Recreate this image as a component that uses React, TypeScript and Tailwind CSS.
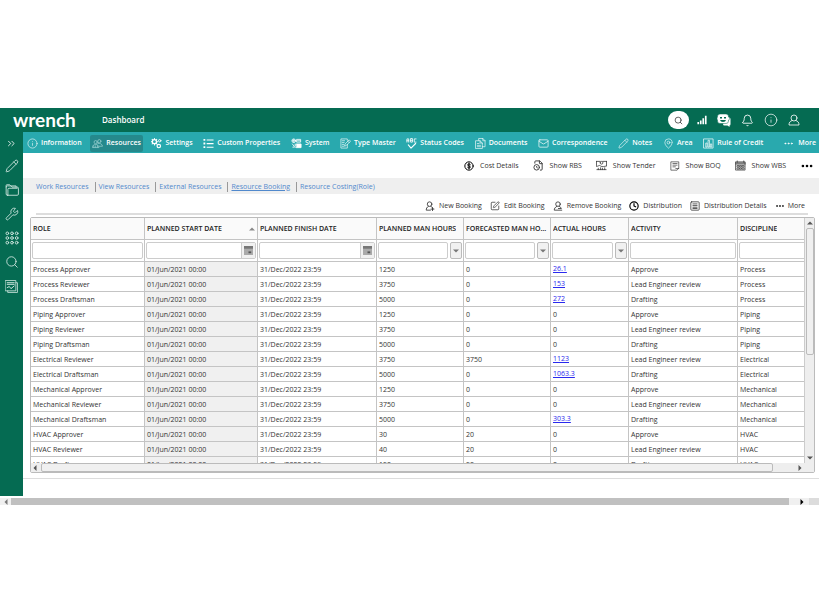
import type { ReactNode } from "react";
import { Bell, Clock, Ellipsis, FileClock, Info, Mail, MapPin, Pencil, Search, SquarePen, Wrench } from "lucide-react";

type IconProps = { className?: string };

const Svg = ({ className = "size-3", children, width = 1.4 }: { className?: string; children: ReactNode; width?: number }) => (
  <svg viewBox="0 0 24 24" fill="none" stroke="currentColor" strokeWidth={width} strokeLinecap="round" strokeLinejoin="round" className={className} aria-hidden="true">
    {children}
  </svg>
);

const People = ({ className }: IconProps) => (
  <Svg className={className} width={1.5}>
    <circle cx="8" cy="9" r="3.5" />
    <circle cx="16" cy="7" r="3.5" />
    <path d="M1 20c0-4 3-6 7-6s6 2 7 6zM13 12c5-1 9 1 10 6h-7M4 17v3M8 17v3M12 17v3" />
  </Svg>
);
const Gears = ({ className }: IconProps) => (
  <Svg className={className} width={2.8}>
    <circle cx="7.5" cy="8" r="4.5" />
    <path d="M7.500 1v2M7.500 13v2M.5 8h2M12.500 8h2M2.500 3l1.500 1.500M11 11.500l1.500 1.500M12.500 3L11 4.500M2.500 13L4 11.500" strokeWidth="2.200" />
    <circle cx="19" cy="6" r="2.600" strokeWidth="2" />
    <circle cx="17" cy="17.5" r="3.800" strokeWidth="2.600" />
  </Svg>
);
const BulletList = ({ className }: IconProps) => (
  <svg viewBox="0 0 24 24" fill="currentColor" className={className} aria-hidden="true">
    <path d="M1 2h4v4H1zM1 10h4v4H1zM1 18h4v4H1zM8 3h15v2.500H8zM8 11h15v2.500H8zM8 19h15v2.500H8z" />
  </svg>
);
const SystemIcon = ({ className }: IconProps) => (
  <Svg className={className} width={1.8}>
    <circle cx="6" cy="6" r="4" /><path d="M3 6h6M6 3v6M13 3h8v6h-8zM14 6h6" />
    <rect x="12" y="13" width="10" height="8" fill="currentColor" /><path d="M3 13l6 8M9 13v4M4 20h2" />
  </Svg>
);
const TypeIcon = ({ className }: IconProps) => (
  <Svg className={className}>
    <path d="M16 14v8H2V2h14v3M5 6h5M5 10h4M5 14h3M5 18h3M10 17l1-4 9-9 3 3-9 9zM17 7l3 3" />
  </Svg>
);
const StatusIcon = ({ className }: IconProps) => (
  <Svg className={className} width={1.8}>
    <path d="M2 9V2h4v7M2 6h4M10 2v7h4V2zM10 5h4M22 2h-4v7h4" />
    <path d="M5 15l6 7L21 12" strokeWidth="2.400" />
  </Svg>
);
const Docs = ({ className }: IconProps) => (
  <Svg className={className}>
    <path d="M8 5V1h9l5 5v13h-6M17 1v5h5M2 6h9l5 5v12H2zM11 6v5h5M5 12h4M5 16h7M5 19h7" />
  </Svg>
);
const BarsBox = ({ className }: IconProps) => (
  <Svg className={className} width={1.5}>
    <rect x="2" y="2" width="20" height="20" /><path d="M6 19v-8h3v8zM11 19V5h3v14zM16 19v-6h3v6z" />
  </Svg>
);
const Coin = ({ className }: IconProps) => (
  <Svg className={className} width={2.4}>
    <circle cx="12" cy="12" r="10" /><path d="M15.500 8.500c-1-2-7-2-7 1s7 2 7 5-6 3-7 1M12 5v14" />
  </Svg>
);
const Tender = ({ className }: IconProps) => (
  <Svg className={className} width={1.7}>
    <path d="M1 3h8M15 3h8M9 6a3 3 0 1 0 6 0 3 3 0 1 0-6 0M1 3v9M23 3v9M1 14c6 0 5-4 9-1s7 1 13 0M2 21h20M5 21v-3M10 21v-4M14 21v-3M19 21v-4" />
  </Svg>
);
const Boq = ({ className }: IconProps) => (
  <Svg className={className} width={1.6}>
    <path d="M3 2h18v15l-4 5H3zM7 6h10M7 10h10M7 14h6M14 18h7" />
  </Svg>
);
const Wbs = ({ className }: IconProps) => (
  <Svg className={className} width={1.5}>
    <path d="M2 4h20v18H2zM2 9h20M5 2v3M19 2v3M5 12h4v3H5zM11 12h3v3h-3zM16 12h4v3h-4zM5 17h4v3H5zM11 17h3v3h-3zM16 17h4v3h-4z" />
    <path d="M2 6.500h20" strokeWidth="2.500" />
  </Svg>
);
const Person = ({ className }: IconProps) => (
  <Svg className={className} width={2}>
    <circle cx="11" cy="7.500" r="5.500" /><path d="M8 13c-4 2-5 5-5 9h10M14 13c3 1 4 3 5 5M18 16v7M14.500 19.500h7" />
  </Svg>
);
const PersonMinus = ({ className }: IconProps) => (
  <Svg className={className} width={2}>
    <circle cx="12" cy="7.500" r="5.500" /><path d="M9 13c-4 2-6 5-6 9h18M15 13c3 1 4 3 5 5h-7" />
  </Svg>
);
const ListBox = ({ className }: IconProps) => (
  <Svg className={className} width={1.9}>
    <rect x="2" y="2" width="20" height="20" rx="2" /><path d="M7 7h10M7 11h10M7 15h10M7 18h10" />
  </Svg>
);
const Signal = ({ className }: IconProps) => (
  <svg viewBox="0 0 24 24" fill="currentColor" className={className} aria-hidden="true">
    <path d="M1 17h4v5H1zM7 13h4v9H7zM13 8h4v14h-4zM19 2h4v20h-4z" />
  </svg>
);
const ChatBot = ({ className }: IconProps) => (
  <svg viewBox="0 0 28 28" className={className} aria-hidden="true">
    <path d="M21 9h3q3 0 3 3v10q0 3-2 3v3l-4-3h-6q-3 0-3-3" fill="white" />
    <path d="M6 2h12q5 0 5 5v1q2 0 2 3t-2 3v2q0 5-5 5H6q-5 0-5-5v-2q-1-1-1-3t1-3V7q0-5 5-5z" fill="white" stroke="#056b52" />
    <path d="M6 8h4v3H6zM14 8h4v3h-4zM6 14h12q-1 4-6 4t-6-4z" fill="#056b52" />
  </svg>
);
const Account = ({ className }: IconProps) => (
  <Svg className={className} width={1.6}>
    <circle cx="12" cy="8" r="6" /><path d="M8.500 13C4 14 2 17 2 22h20c0-5-2-8-6.500-9" />
  </Svg>
);
const Folder = ({ className }: IconProps) => (
  <Svg className={className} width={1.5}>
    <path d="M4 21h17q2 0 2-2V9q0-2-2-2h-9l-2-2H4q-2 0-2 2v12q0 2 2 2zM5 21V11q0-2 2-2h14M2 7V4q0-1 1-1h5l2 2h9v2" />
  </Svg>
);
const Dots = ({ className }: IconProps) => (
  <Svg className={className} width={1.6}>
    {[4, 12, 20].map((y) => [4, 12, 20].map((x) => <circle key={`${x}-${y}`} cx={x} cy={y} r="2.300" />))}
  </Svg>
);
const Report = ({ className }: IconProps) => (
  <Svg className={className} width={1.5}>
    <path d="M20 5h3v18H5v-3" /><rect x="1" y="1" width="19" height="19" /><path d="M4 5h13M4 8h13M4 14l4-2 3 4 6-5" strokeWidth="1.800" />
  </Svg>
);

const thin = 1.3;
const navItems: { label: string; icon: ReactNode; active?: boolean }[] = [
  { label: "Information", icon: <Info className="size-[11px]" strokeWidth={thin} /> },
  { label: "Resources", icon: <People className="size-[11px] text-[#9fd3d3]" />, active: true },
  { label: "Settings", icon: <Gears className="size-[11px]" /> },
  { label: "Custom Properties", icon: <BulletList className="size-[11px]" /> },
  { label: "System", icon: <SystemIcon className="size-[11px]" /> },
  { label: "Type Master", icon: <TypeIcon className="size-[11px]" /> },
  { label: "Status Codes", icon: <StatusIcon className="size-[11px]" /> },
  { label: "Documents", icon: <Docs className="size-[11px]" /> },
  { label: "Correspondence", icon: <Mail className="size-[11px]" strokeWidth={1.5} /> },
  { label: "Notes", icon: <Pencil className="size-[11px]" strokeWidth={thin} /> },
  { label: "Area", icon: <MapPin className="size-[11px]" strokeWidth={thin} /> },
  { label: "Rule of Credit", icon: <BarsBox className="size-[11px]" /> },
];

const sideItems = [
  { label: "Edit", icon: <Pencil className="size-[14px]" strokeWidth={1.5} /> },
  { label: "Folders", icon: <Folder className="size-[14px]" /> },
  { label: "Tools", icon: <Wrench className="size-[14px]" strokeWidth={1.5} /> },
  { label: "Apps", icon: <Dots className="size-[14px]" /> },
  { label: "Search", icon: <Search className="size-[14px]" strokeWidth={1.5} /> },
  { label: "Reports", icon: <Report className="size-[13px]" /> },
];

const tools = [
  { label: "Cost Details", icon: <Coin className="size-[10px] text-black" /> },
  { label: "Show RBS", icon: <FileClock className="size-[11px]" strokeWidth={2} /> },
  { label: "Show Tender", icon: <Tender className="size-[11px]" /> },
  { label: "Show BOQ", icon: <Boq className="size-[10px]" /> },
  { label: "Show WBS", icon: <Wbs className="size-[11px]" /> },
];

const actions = [
  { label: "New Booking", icon: <Person className="size-[10px]" /> },
  { label: "Edit Booking", icon: <SquarePen className="size-[10px]" strokeWidth={1.8} /> },
  { label: "Remove Booking", icon: <PersonMinus className="size-[10px]" /> },
  { label: "Distribution", icon: <Clock className="size-[10px] text-black" strokeWidth={2.8} /> },
  { label: "Distribution Details", icon: <ListBox className="size-[10px]" /> },
];

const subTabs = ["Work Resources", "View Resources", "External Resources", "Resource Booking", "Resource Costing(Role)"];

type Filter = "text" | "date" | "number";
const columns: { label: string; filter: Filter; width: string }[] = [
  { label: "ROLE", filter: "text", width: "w-[114px]" },
  { label: "PLANNED START DATE", filter: "date", width: "w-[113px]" },
  { label: "PLANNED FINISH DATE", filter: "date", width: "w-[119px]" },
  { label: "PLANNED MAN HOURS", filter: "number", width: "w-[87px]" },
  { label: "FORECASTED MAN HOURS", filter: "number", width: "w-[87px]" },
  { label: "ACTUAL HOURS", filter: "number", width: "w-[78px]" },
  { label: "ACTIVITY", filter: "text", width: "w-[109px]" },
  { label: "DISCIPLINE", filter: "text", width: "" },
];

const rows = [
  ["Process Approver", "1250", "0", "26.1", "Approve", "Process"],
  ["Process Reviewer", "3750", "0", "153", "Lead Engineer review", "Process"],
  ["Process Draftsman", "5000", "0", "272", "Drafting", "Process"],
  ["Piping Approver", "1250", "0", "0", "Approve", "Piping"],
  ["Piping Reviewer", "3750", "0", "0", "Lead Engineer review", "Piping"],
  ["Piping Draftsman", "5000", "0", "0", "Drafting", "Piping"],
  ["Electrical Reviewer", "3750", "3750", "1123", "Lead Engineer review", "Electrical"],
  ["Electrical Draftsman", "5000", "0", "1063.3", "Drafting", "Electrical"],
  ["Mechanical Approver", "1250", "0", "0", "Approve", "Mechanical"],
  ["Mechanical Reviewer", "3750", "0", "0", "Lead Engineer review", "Mechanical"],
  ["Mechanical Draftsman", "5000", "0", "303.3", "Drafting", "Mechanical"],
  ["HVAC Approver", "30", "20", "0", "Approve", "HVAC"],
  ["HVAC Reviewer", "40", "20", "0", "Lead Engineer review", "HVAC"],
  ["HVAC Draftsman", "150", "50", "0", "Drafting", "HVAC"],
];

function Arrow({ dir, className = "text-[#555]" }: { dir: "up" | "down" | "left" | "right"; className?: string }) {
  const d = { up: "M0 6L4 2L8 6z", down: "M0 2L4 6L8 2z", left: "M6 0L2 4L6 8z", right: "M2 0L6 4L2 8z" }[dir];
  return (
    <svg viewBox="0 0 8 8" fill="currentColor" className={`size-[6px] shrink-0 ${className}`} aria-hidden="true">
      <path d={d} />
    </svg>
  );
}

function FilterBox({ label, filter }: { label: string; filter: Filter }) {
  if (filter === "date") {
    return (
      <div className="flex h-[17px] rounded-xs border border-[#ccc] bg-white">
        <input aria-label={`Filter ${label}`} className="w-full min-w-0 flex-1 outline-none" />
        <button aria-label={`Pick ${label}`} className="grid w-[14px] shrink-0 place-items-center border-l border-[#ccc] bg-[#f1f1f1]">
          <svg viewBox="0 0 10 10" className="size-[9px]" aria-hidden="true">
            <path d="M0 0h10v10H0z" fill="#aaa" /><path d="M0 0h10v3H0z" fill="#777" /><path d="M5 6h3v2H5z" fill="#555" />
          </svg>
        </button>
      </div>
    );
  }
  return (
    <div className="flex gap-[2px]">
      <input aria-label={`Filter ${label}`} className="h-[17px] w-full min-w-0 flex-1 rounded-xs border border-[#ccc] bg-white outline-none" />
      {filter === "number" && (
        <button aria-label={`${label} options`} className="grid h-[17px] w-3 shrink-0 place-items-center rounded-xs border border-[#bbb] bg-[#f1f1f1]">
          <Arrow dir="down" className="text-[#777]" />
        </button>
      )}
    </div>
  );
}

function BookingTable() {
  return (
    <table className="w-[calc(100%+10px)] table-fixed border-separate border-spacing-0 text-left text-[#333]">
      <thead>
        <tr className="h-[22px] bg-[#fafafa]">
          {columns.map((c, i) => (
            <th key={c.label} scope="col" className={`${c.width} border-r border-b border-[#c4c4c4] p-0 px-[2px] font-semibold text-[#222]`}>
              <div className="flex items-center justify-between">
                <span className="truncate">{c.label}</span>
                {i === 1 && <Arrow dir="up" className="text-[#888]" />}
              </div>
            </th>
          ))}
        </tr>
        <tr className="h-[22px]">
          {columns.map((c) => (
            <td key={c.label} className="border-r border-b border-[#c4c4c4] p-0 px-px">
              <FilterBox label={c.label} filter={c.filter} />
            </td>
          ))}
        </tr>
      </thead>
      <tbody>
        {rows.map(([role, planned, forecast, actual, activity, discipline]) => (
          <tr key={role} className="h-[15px]">
            {[role, "01/Jun/2021 00:00", "31/Dec/2022 23:59", planned, forecast, actual, activity, discipline].map((v, i) => (
              <td key={i} className={`border-r border-b border-[#c4c4c4] px-[2px] pt-[2px] pb-0 leading-3 whitespace-nowrap ${i === 1 ? "bg-[#f0f0f0]" : ""}`}>
                {i === 5 && v !== "0" ? <a href="#hours" className="block h-3 leading-[10px] text-[#2a2aee] underline">{v}</a> : v}
              </td>
            ))}
          </tr>
        ))}
      </tbody>
    </table>
  );
}

export default function App() {
  return (
    <div className="min-h-screen overflow-hidden bg-white pt-[108px] font-['Open_Sans',sans-serif] text-[7px] leading-[10px]">
      <header className="flex h-6 items-center bg-[#056b52] pr-[19px] pl-[13px] text-white">
        <span className="w-[89px] font-['Lato',sans-serif] text-[19px] leading-6 font-bold">wrench</span>
        <a href="#dashboard" className="text-[8px] font-semibold">Dashboard</a>
        <div className="ml-auto flex items-center gap-[10px]">
          <button aria-label="Search" className="-mr-[2px] grid h-[18px] w-[21px] place-items-center rounded-full bg-white text-[#333]"><Search className="size-[9px]" /></button>
          <button aria-label="Statistics"><Signal className="size-[10px]" /></button>
          <button aria-label="Assistant"><ChatBot className="size-[14px]" /></button>
          <button aria-label="Notifications"><Bell className="size-[13px]" strokeWidth={1.6} /></button>
          <button aria-label="About"><Info className="size-[14px]" strokeWidth={1.2} /></button>
          <button aria-label="Account"><Account className="size-3" /></button>
        </div>
      </header>

      <div className="flex">
        <aside className="flex w-[23px] shrink-0 flex-col items-center bg-[#056b52] text-[#cfe6df]">
          <button aria-label="Expand menu" className="grid h-[22px] place-items-center pt-px text-white">
            <Svg className="size-[9px]" width={2.2}><path d="M4 6l6 6-6 6M13 6l6 6-6 6" /></Svg>
          </button>
          {sideItems.map((s) => (
            <button key={s.label} aria-label={s.label} className="grid h-6 place-items-center">{s.icon}</button>
          ))}
        </aside>

        <main className="flex min-w-0 flex-1 flex-col">
          <nav className="flex h-[21px] items-center bg-[#29a9ae] pt-px pr-[3px] pl-[2px] font-semibold text-white">
            <div className="mr-[18px] flex flex-1 items-center justify-between">
              {navItems.map((n) => (
                <a key={n.label} href="#nav" className={`flex h-[17px] shrink-0 items-center gap-[3px] rounded-xs px-[2px] ${n.active ? "bg-[#25898c]" : ""}`}>
                  {n.icon}{n.label}
                </a>
              ))}
            </div>
            <button className="flex shrink-0 items-center gap-1"><Ellipsis className="size-[11px]" />More</button>
          </nav>

          <div className="flex h-[25px] items-center justify-end gap-[14px] pr-[5px] text-[#333]">
            {tools.map((t) => (
              <button key={t.label} className="flex items-center gap-[6px]">{t.icon}{t.label}</button>
            ))}
            <button aria-label="More tools" className="text-black"><Ellipsis className="size-[14px]" strokeWidth={2.5} /></button>
          </div>

          <div className="flex h-4 items-center bg-[#efefef] pt-px pl-[13px] text-[#5189cc]">
            {subTabs.map((t, i) => (
              <a key={t} href="#tab" className={`mr-[3px] pr-[6px] ${i < 4 ? "border-r border-[#999]" : ""}`}>
                <span className={i === 3 ? "underline" : ""}>{t}</span>
              </a>
            ))}
          </div>

          <div className="mr-[11px] ml-[13px] flex h-[21px] items-center justify-end gap-[8px] border-b-2 border-[#ddd] pt-[5px] pr-[3px] text-[#333]">
            {actions.map((a) => (
              <button key={a.label} className="flex items-center gap-1">{a.icon}{a.label}</button>
            ))}
            <button className="flex items-center gap-[3px]"><Ellipsis className="size-[10px]" strokeWidth={3} />More</button>
          </div>

          <section className="mt-[2px] mr-1 ml-[7px] rounded-xs border border-[#bbb]">
            <div className="flex">
              <div className="h-[245px] min-w-0 flex-1 overflow-hidden"><BookingTable /></div>
              <div className="flex w-[10px] flex-col items-center border-l border-[#ccc] bg-[#eee] pt-[2px]">
                <Arrow dir="up" />
                <div className="mt-[2px] h-[127px] w-2 rounded-xs border border-[#bbb] bg-[#f0f0f0]" />
                <div className="mt-auto pb-[2px]"><Arrow dir="down" /></div>
              </div>
            </div>
            <div className="flex h-[9px] items-center bg-[#eee] pr-[11px] pl-[1px]">
              <Arrow dir="left" />
              <div className="ml-[3px] h-[9px] flex-1 rounded-xs border border-[#bbb] bg-[#f0f0f0]" />
              <div className="ml-6"><Arrow dir="right" /></div>
            </div>
          </section>
          <div className="mt-[5px] mb-[17px] border-t border-[#ddd]" />
        </main>
      </div>

      <div className="mt-[2px] flex h-[7px] items-center bg-[#f0f0f0]">
        <div className="grid w-[11px] place-items-center"><Arrow dir="left" className="text-[#777]" /></div>
        <div className="h-full flex-1 bg-[#c0c0c0]" />
        <div className="flex w-4 justify-end"><Arrow dir="right" className="text-black" /></div>
        <div className="ml-1 h-full w-[10px] bg-[#dcdcdc]" />
      </div>
    </div>
  );
}
